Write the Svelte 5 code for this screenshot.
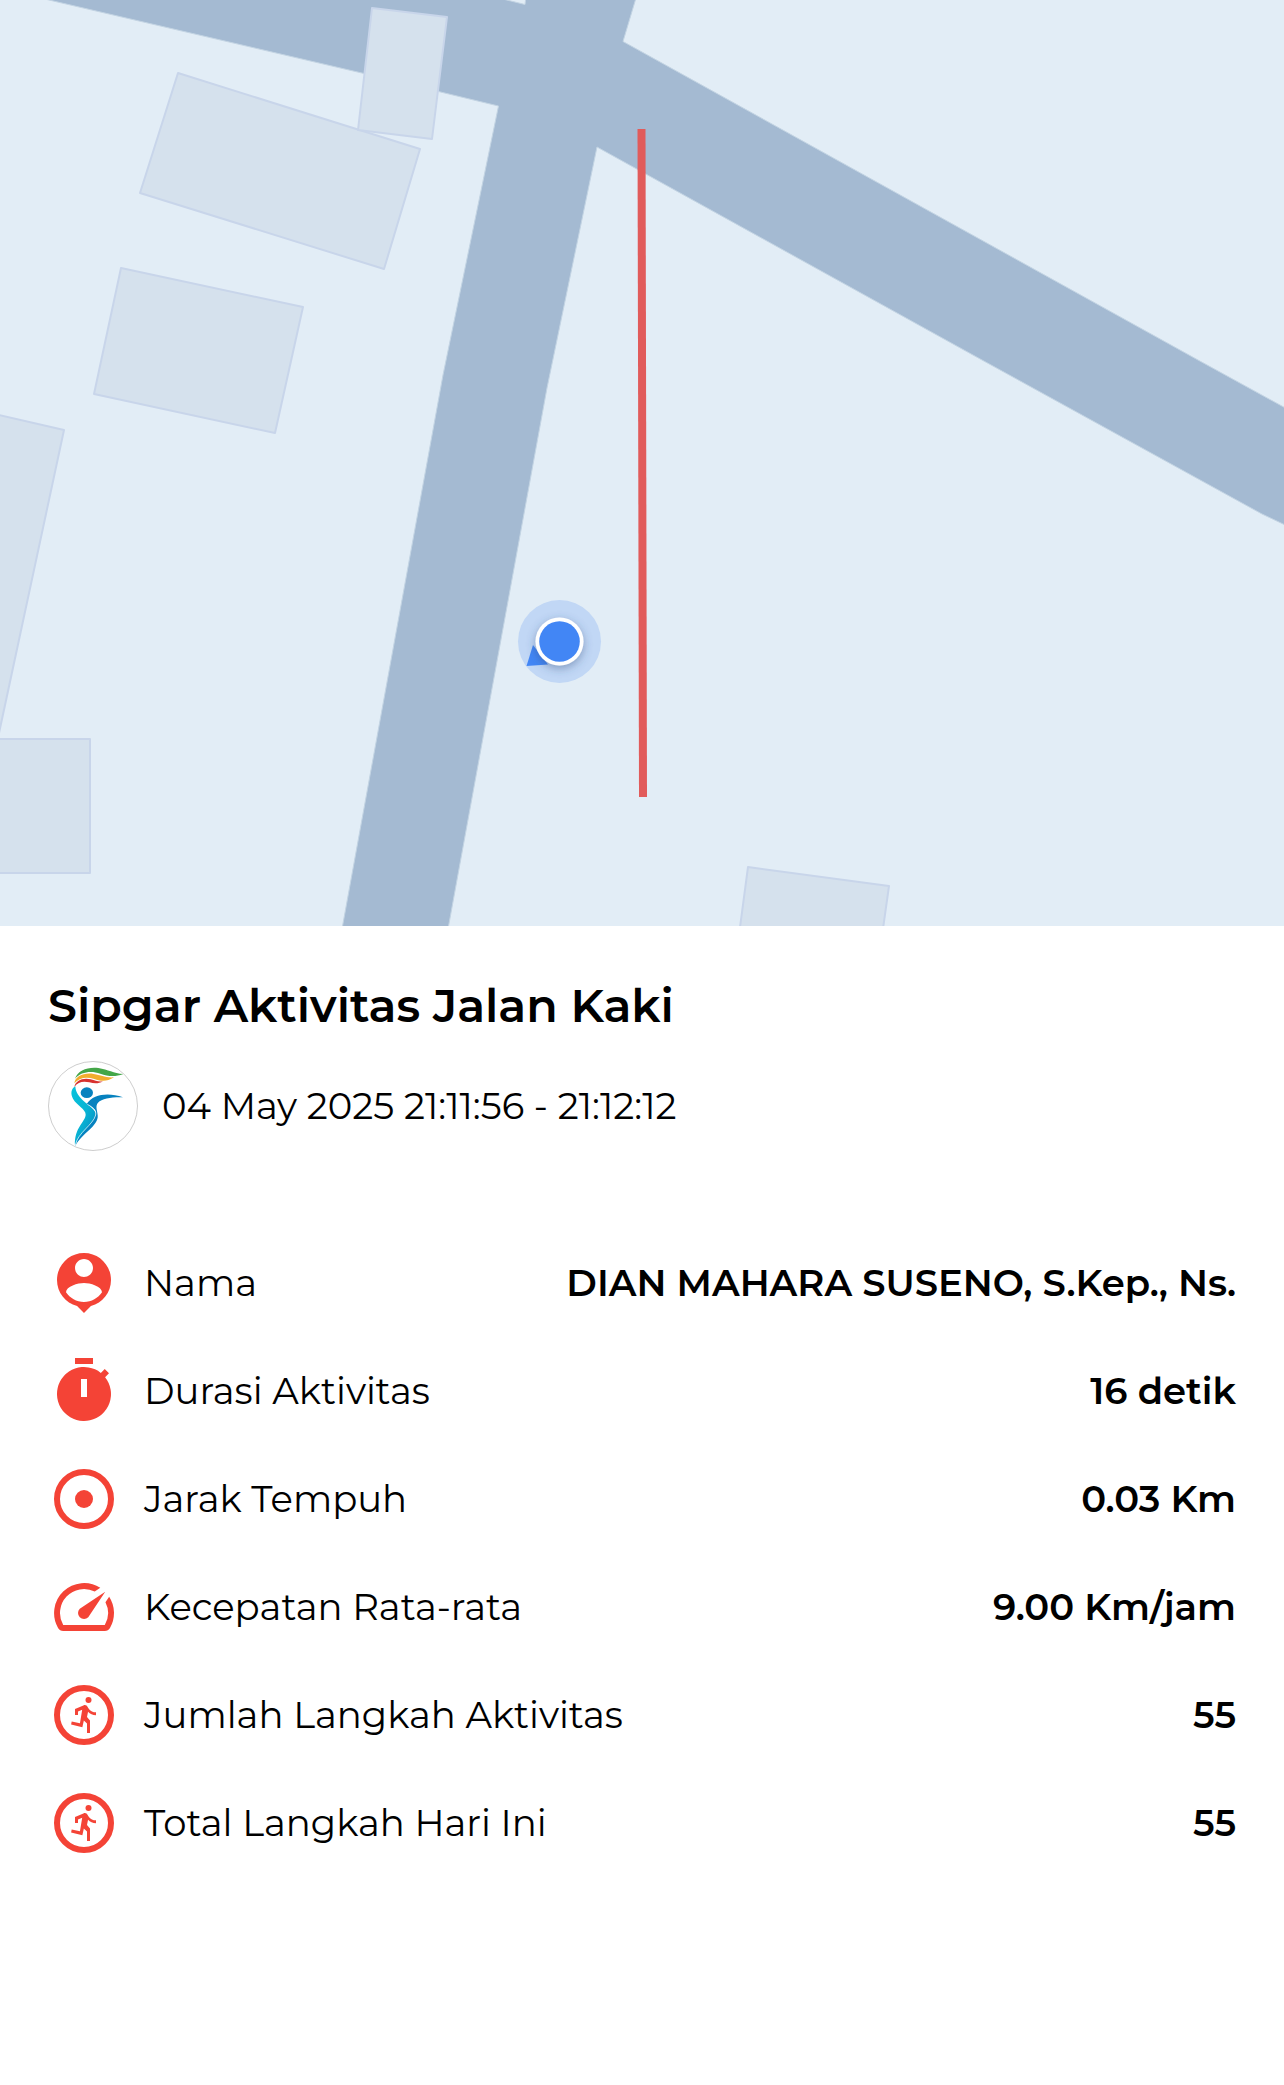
<script lang="ts">
	type Icon = 'person' | 'timer' | 'target' | 'speed' | 'run';

	const title = 'Sipgar Aktivitas Jalan Kaki';
	const time = '04 May 2025 21:11:56 - 21:12:12';

	const stats: Array<{ icon: Icon; label: string; value: string }> = [
		{ icon: 'person', label: 'Nama', value: 'DIAN MAHARA SUSENO, S.Kep., Ns.' },
		{ icon: 'timer', label: 'Durasi Aktivitas', value: '16 detik' },
		{ icon: 'target', label: 'Jarak Tempuh', value: '0.03 Km' },
		{ icon: 'speed', label: 'Kecepatan Rata-rata', value: '9.00 Km/jam' },
		{ icon: 'run', label: 'Jumlah Langkah Aktivitas', value: '55' },
		{ icon: 'run', label: 'Total Langkah Hari Ini', value: '55' }
	];

	const buildings = [
		'178,73 420,149 384,269 140,193',
		'372,8 447,17 432,139 358,130',
		'121,268 303,307 275,433 94,394',
		'-10,413 64,430 -10,775',
		'-10,739 90,739 90,873 -10,873',
		'748,867 889,886 880,950 737,950'
	];
</script>

<main class="activity">
	<svg class="map" viewBox="0 0 1284 926" role="img" aria-label="Peta rute">
		<defs>
			<filter id="dot-shadow" x="-50%" y="-50%" width="200%" height="200%">
				<feDropShadow dx="0" dy="3" stdDeviation="5" flood-color="#33507f" flood-opacity="0.45" />
			</filter>
		</defs>
		<rect width="1284" height="926" fill="#e2edf6" />
		<path
			class="road"
			d="M-10 -14L49 0L364 73.500L498.500 106L443 375L340 940H446L547 388L597 147L982 360L1262 514L1300 532V416L1198 360L623 41.500L639 -12H527L525 4.500L450 -14Z"
		/>
		{#each buildings as points}
			<polygon class="building" {points} />
		{/each}
		<path d="M641.500 129L643 797" stroke="#e15b5b" stroke-width="8" />
		<circle cx="559.500" cy="641.500" r="41.500" fill="#c1d7f5" />
		<path d="M526.500 666L533 645L548 664.500Z" fill="#4286f5" />
		<circle cx="559.500" cy="641.500" r="24" fill="#fff" filter="url(#dot-shadow)" />
		<circle cx="559.500" cy="641.500" r="20.300" fill="#4286f5" />
	</svg>

	<section class="details">
		<h1>{title}</h1>
		<div class="when">
			<svg class="logo" viewBox="54 63 270 270" aria-hidden="true">
				<defs>
					<linearGradient id="body" x1="0" y1="0" x2="1" y2="1">
						<stop offset="0" stop-color="#08c3dc" />
						<stop offset="0.5" stop-color="#08b4d4" />
						<stop offset="1" stop-color="#0782bf" />
					</linearGradient>
				</defs>
				<circle cx="189" cy="198" r="133.500" fill="#fff" stroke="#b4b4b4" stroke-width="2" />
				<path
					d="M135 116C143 91 174 80 205 84C235 88 250 101 280 102C254 112 234 109 211 101C183 92 153 95 135 116Z"
					fill="#44a648"
				/>
				<path
					d="M133 130C136 108 163 97 191 102C214 105 226 114 252 112C231 126 212 124 193 117C168 109 147 113 133 130Z"
					fill="#f2ad2e"
				/>
				<path
					d="M133 141C136 122 159 112 182 118C196 122 205 126 219 124C205 132 193 131 178 127C160 123 144 125 133 141Z"
					fill="#d8322f"
				/>
				<ellipse cx="170.500" cy="158" rx="18.500" ry="16" fill="#0782bf" />
				<path
					d="M136 139C123 147 121 161 129 176C140 196 168 208 167 224C166 246 132 262 135 317C150 280 199 250 197 218C186 195 137 178 136 139Z"
					fill="url(#body)"
				/>
				<path
					d="M170 192C190 162 235 157 279 172C247 171 216 175 204 188C195 198 202 211 203 226C207 258 154 281 136 318C143 281 198 250 198 217C195 206 184 199 170 192Z"
					fill="#0782bf"
				/>
				<path
					d="M172 193C190 202 200 211 197 225C190 254 143 278 136 315"
					fill="none"
					stroke="#fff"
					stroke-width="2"
				/>
			</svg>
			<time>{time}</time>
		</div>

		<dl class="stats">
			{#each stats as stat}
				<div class="row">
					<dt>
						<svg class="icon" viewBox="0 0 24 24" aria-hidden="true">
							{#if stat.icon === 'person'}
								<path
									d="M12 2c-4.970 0-9 4.030-9 9 0 4.170 2.840 7.670 6.690 8.690L12 22l2.310-2.310C18.160 18.670 21 15.170 21 11c0-4.970-4.030-9-9-9zm0 2c1.660 0 3 1.340 3 3s-1.340 3-3 3-3-1.340-3-3 1.340-3 3-3zm0 14.300c-2.500 0-4.710-1.280-6-3.220.03-1.990 4-3.080 6-3.080 1.990 0 5.970 1.090 6 3.080-1.290 1.940-3.500 3.220-6 3.220z"
								/>
							{:else if stat.icon === 'timer'}
								<path
									fill-rule="evenodd"
									d="M9 1h6v2H9zM19.030 7.390l1.300-1.300-1.420-1.420-1.300 1.300A9 9 0 1 0 19.030 7.390zM13 14h-2V8h2z"
								/>
							{:else if stat.icon === 'target'}
								<circle cx="12" cy="12" r="9" fill="none" stroke="currentColor" stroke-width="2" />
								<circle cx="12" cy="12" r="3" />
							{:else if stat.icon === 'speed'}
								<path
									d="M20.380 8.570l-1.230 1.850a8 8 0 0 1-.22 7.580H5.070A8 8 0 0 1 15.580 6.850l1.850-1.230A10 10 0 0 0 3.350 19a2 2 0 0 0 1.720 1h13.850a2 2 0 0 0 1.740-1 10 10 0 0 0-.27-10.440zm-9.790 6.840a2 2 0 0 0 2.830 0l5.660-8.490-8.490 5.660a2 2 0 0 0 0 2.830z"
								/>
							{:else}
								<circle cx="12" cy="12" r="9" fill="none" stroke="currentColor" stroke-width="2" />
								<circle cx="13.500" cy="7" r="1" />
								<path
									d="M9 12V10L11.800 8.800C12.500 8.550 12.900 8.800 13.200 9.300L13.700 10.050C14.200 10.700 15 11.100 16 11.100V12.100C14.900 12.050 14 11.600 13.350 10.900L13 12.700L14 13.800V18H13V14.800L11.950 13.800L11.450 16.100L7.700 15.200L7.900 14.200L10.650 14.750L11.400 10.250L10 10.800V12Z"
								/>
							{/if}
						</svg>
						{stat.label}
					</dt>
					<dd>{stat.value}</dd>
				</div>
			{/each}
		</dl>
	</section>
</main>

<style>
	:global(body) {
		margin: 0;
		background: #fff;
	}

	.activity {
		font-family: Montserrat, Inter, sans-serif;
		font-size: 37px;
		line-height: 48px;
		font-weight: 400;
		color: #000;
	}

	.map {
		display: block;
		width: 100%;
		height: auto;
	}

	.road {
		fill: #a4bad2;
		stroke: #c3d4e3;
		stroke-width: 1;
	}

	.building {
		fill: #d5e1ed;
		stroke: #c8d5ea;
		stroke-width: 2;
		stroke-linejoin: round;
	}

	.details {
		padding: 52px 48px 48px;
	}

	h1 {
		margin: 0;
		font-size: 46px;
		line-height: 56px;
		font-weight: 600;
	}

	.when {
		display: flex;
		align-items: center;
		gap: 24px;
		margin-top: 27px;
	}

	.logo {
		width: 90px;
		height: 90px;
		flex: none;
	}

	.stats {
		display: flex;
		flex-direction: column;
		gap: 36px;
		margin: 96px 0 0;
	}

	.row {
		display: flex;
		align-items: center;
		justify-content: space-between;
		gap: 24px;
	}

	dt {
		display: flex;
		align-items: center;
		gap: 24px;
	}

	dd {
		margin: 0;
		font-weight: 600;
		text-align: right;
	}

	.icon {
		width: 72px;
		height: 72px;
		flex: none;
		fill: currentColor;
		color: #f44336;
	}
</style>
